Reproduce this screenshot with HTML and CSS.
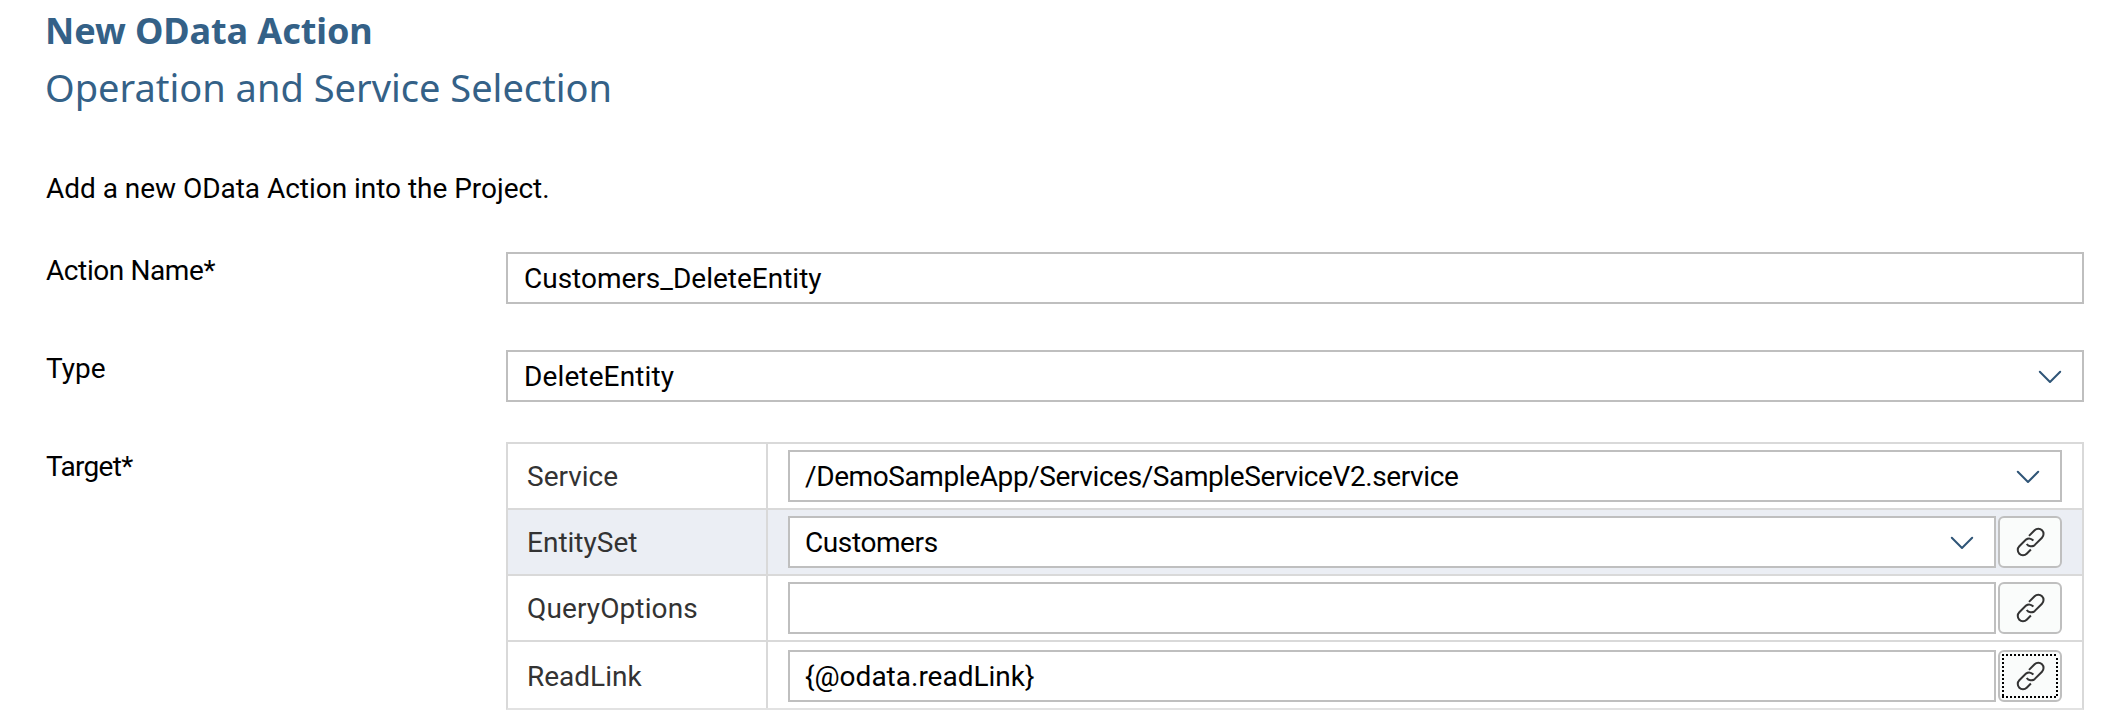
FILE: index.html
```
<!DOCTYPE html>
<html lang="en">
<head>
<meta charset="utf-8">
<title>New OData Action</title>
<link rel="stylesheet" href="styles.css">
</head>
<body>
<svg class="defs" aria-hidden="true">
  <symbol id="chevron" viewBox="0 0 24 14"><path d="M1.8 1.8 12 12 22.2 1.8"/></symbol>
  <symbol id="link" viewBox="0 0 30 30">
    <path d="M14 8.9 19.6 3.3A5.2 5.2 0 0 1 27 10.7L19.8 17.9A5.4 5.4 0 0 1 11.7 17"/>
    <path d="M15.9 22.5 11.7 26.7A5.2 5.2 0 0 1 4.3 19.3L11 12.6A5.4 5.4 0 0 1 18.3 13.6"/>
  </symbol>
</svg>
<main class="page">
  <h1 class="title">New OData Action</h1>
  <h2 class="subtitle">Operation and Service Selection</h2>
  <p class="intro">Add a new OData Action into the Project.</p>

  <div class="row">
    <span class="label snug">Action Name*</span>
    <div class="field"><span>Customers_DeleteEntity</span></div>
  </div>
  <div class="row compact">
    <span class="label">Type</span>
    <div class="field"><span class="wide">DeleteEntity</span><svg class="chevron"><use href="#chevron"/></svg></div>
  </div>
  <div class="row">
    <span class="label tight lowered">Target*</span>
    <div class="table">
      <div class="line">
        <span class="key">Service</span>
        <div class="cell"><div class="field"><span class="snug">/DemoSampleApp/Services/SampleServiceV2.service</span><svg class="chevron"><use href="#chevron"/></svg></div></div>
      </div>
      <div class="line active">
        <span class="key">EntitySet</span>
        <div class="cell"><div class="field"><span class="snug">Customers</span><svg class="chevron"><use href="#chevron"/></svg></div>
        <button class="bind" aria-label="Bind EntitySet"><svg class="link"><use href="#link"/></svg></button></div>
      </div>
      <div class="line">
        <span class="key wide">QueryOptions</span>
        <div class="cell"><div class="field"></div>
        <button class="bind" aria-label="Bind QueryOptions"><svg class="link"><use href="#link"/></svg></button></div>
      </div>
      <div class="line last">
        <span class="key">ReadLink</span>
        <div class="cell"><div class="field"><span>{@odata.readLink}</span></div>
        <button class="bind" aria-label="Bind ReadLink"><svg class="link"><use href="#link"/></svg><svg class="focus"><path d="M0 1H56M0 43H56M1 4V42M55 4V42"/></svg></button></div>
      </div>
    </div>
  </div>
</main>
</body>
</html>
```
FILE: styles.css
```
* { box-sizing: border-box; }
body { margin: 0; background: #fff; color: #000; font: 28px/36px Roboto, sans-serif; }
.defs { display: none; }
.page { padding: 3px 24px 0 46px; }
.title, .subtitle { margin: 0; color: #346187; font-family: "Noto Sans", sans-serif; }
.title { font-size: 36px; line-height: 56px; font-weight: 700; margin-left: -1px; letter-spacing: -0.08px; }
.subtitle { font-size: 38px; line-height: 57px; font-weight: 400; margin-left: -1px; }
.intro { margin: 55px 0 45px; letter-spacing: -0.03px; }
.row { display: grid; grid-template-columns: 460px 1fr; margin-bottom: 46px; }
.row.compact { margin-bottom: 40px; }
.label { padding-top: 1px; }
.label.lowered { padding-top: 7px; }
.field { display: flex; align-items: center; justify-content: space-between; flex: 1; height: 52px; padding: 1px 20px 0 16px; border: 2px solid #bfbfbf; background: #fff; }
.snug { letter-spacing: -0.4px; }
.tight { letter-spacing: -0.7px; }
.wide { letter-spacing: 0.12px; }
.chevron { width: 24px; height: 14px; fill: none; stroke: #2f5577; stroke-width: 2; stroke-linecap: round; stroke-linejoin: round; }
.table { border: 2px solid #d9d9d9; border-bottom-color: #e2e2e2; }
.line { display: flex; height: 66px; border-bottom: 2px solid #d9d9d9; }
.line.last { border-bottom: 0; }
.line.last .key { padding-top: 3px; }
.line.last .cell { padding-top: 2px; }
.active { background: #ebeef4; }
.key { display: flex; align-items: center; width: 260px; padding: 1px 0 0 19px; border-right: 2px solid #d9d9d9; color: #333; }
.cell { display: flex; align-items: center; flex: 1; gap: 2px; padding: 0 20px; }
.cell .field { padding-left: 15px; }
.bind { position: relative; width: 64px; height: 52px; padding: 0; border: 2px solid #bfbfbf; border-radius: 6px; background: #fafcfb; }
.link { display: block; width: 30px; height: 30px; margin: 0 auto; fill: none; stroke: #333; stroke-width: 2; stroke-linecap: butt; }
.focus { position: absolute; left: 2px; top: 2px; width: 56px; height: 44px; fill: none; stroke: #000; stroke-width: 2; stroke-dasharray: 2 2; }
```
